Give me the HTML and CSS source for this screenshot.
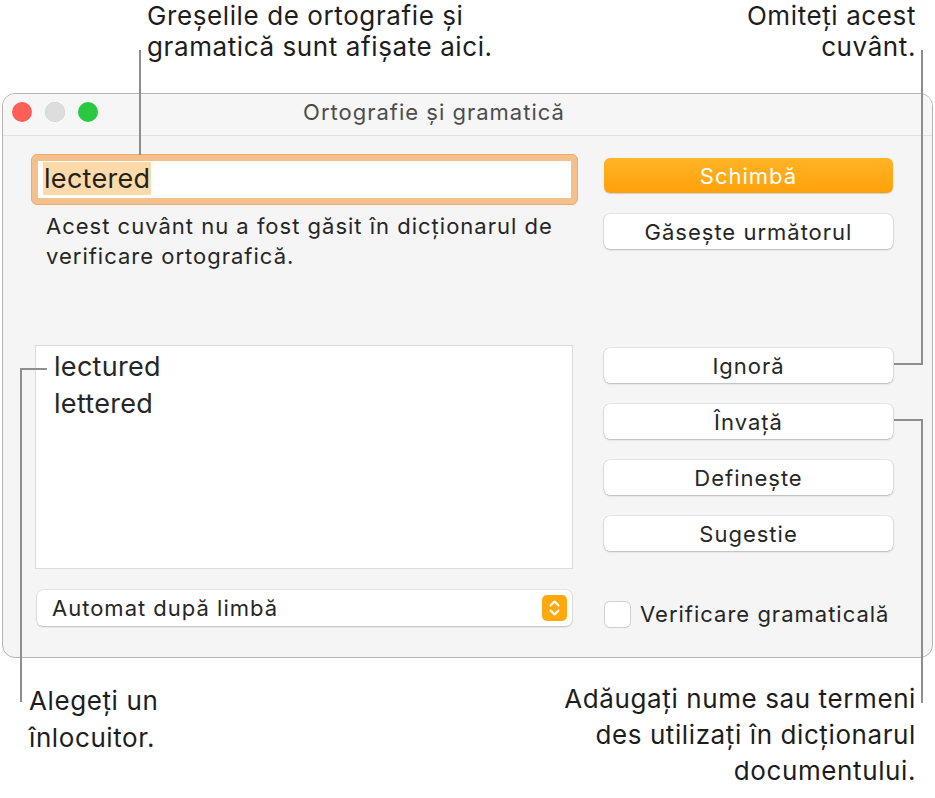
FILE: index.html
```html
<!DOCTYPE html>
<html lang="ro">
<head>
<meta charset="utf-8">
<title>Ortografie și gramatică</title>
<link rel="stylesheet" href="styles.css">
</head>
<body>
<div class="page">
  <div class="window">
    <div class="titlebar">
      <div class="lights">
        <span class="light red"></span>
        <span class="light gray"></span>
        <span class="light green"></span>
      </div>
      <div class="title">Ortografie și gramatică</div>
      <div></div>
    </div>
    <div class="content">
      <div class="left">
        <div class="ring"><div class="field"><span class="sel">lectered</span></div></div>
        <p class="desc">Acest cuvânt nu a fost găsit în dicționarul de verificare ortografică.</p>
        <div class="list">
          <div class="item">lectured</div>
          <div class="item">lettered</div>
        </div>
        <div class="popup">
          <span class="popup-label">Automat după limbă</span>
          <span class="stepper">
            <svg width="25" height="26" viewBox="0 0 25 26"><rect width="25" height="26" rx="5" fill="#ffa90f"/><path d="M8.5 10.5 L12.5 6.5 L16.5 10.5 M8.5 15.5 L12.5 19.5 L16.5 15.5" fill="none" stroke="#fff" stroke-width="2" stroke-linecap="round" stroke-linejoin="round"/></svg>
          </span>
        </div>
      </div>
      <div class="right">
        <button class="btn primary">Schimbă</button>
        <button class="btn">Găsește următorul</button>
        <button class="btn group">Ignoră</button>
        <button class="btn">Învață</button>
        <button class="btn">Definește</button>
        <button class="btn">Sugestie</button>
        <label class="check"><span class="box"></span><span>Verificare gramaticală</span></label>
      </div>
    </div>
  </div>

  <div class="note note-top">Greșelile de ortografie și<br>gramatică sunt afișate aici.</div>
  <div class="note note-omit">Omiteți acest<br>cuvânt.</div>
  <div class="note note-choose">Alegeți un<br>înlocuitor.</div>
  <div class="note note-add">Adăugați nume sau termeni<br>des utilizați în dicționarul<br>documentului.</div>

  <div class="line l-top"></div>
  <div class="line l-omit-v"></div>
  <div class="line l-omit-h"></div>
  <div class="line l-add-h"></div>
  <div class="line l-add-v"></div>
  <div class="line l-choose-h"></div>
  <div class="line l-choose-v"></div>
</div>
</body>
</html>
```
FILE: styles.css
```css
* { box-sizing: border-box; }
html, body { margin: 0; padding: 0; background: #fff; }
body {
  font-family: Inter, "Noto Sans", "DejaVu Sans", sans-serif;
  color: #262626;
}
.page {
  position: relative;
  width: 935px;
  height: 798px;
  padding: 93px 0 0 2px;
  overflow: hidden;
}
.window {
  width: 931px;
  height: 565px;
  border: 1px solid #b4b4b4;
  border-radius: 13px;
  background: #f5f5f5;
  overflow: hidden;
}
.titlebar {
  height: 42px;
  border-bottom: 1px solid #e1e1e1;
  background: #f6f6f6;
  display: grid;
  grid-template-columns: 1fr auto 1fr;
  align-items: center;
  padding: 0 76px 6px 9px;
}
.lights { display: flex; gap: 13px; }
.light {
  width: 20px; height: 20px; border-radius: 50%;
  display: block;
}
.red { background: #fe5f57; }
.gray { background: #dddddd; box-shadow: inset 0 0 0 0.5px #cfcfcf; }
.green { background: #2ac840; }
.title {
  font-size: 22px;
  color: #4d4d4d;
  letter-spacing: 1px;
}
.content {
  display: flex;
  gap: 26px;
  padding-left: 28px;
}
.left { width: 547px; display: flex; flex-direction: column; }
.right { width: 289px; display: flex; flex-direction: column; padding-top: 22px; }

.ring {
  margin-top: 18px;
  height: 51px;
  padding: 6px;
  border: 1px solid #eaab73;
  border-radius: 6px;
  background: #f4c08d;
}
.field {
  height: 37px;
  background: #fff;
  padding: 1px 0 0 5px;
  font-size: 27px;
  line-height: 34px;
  color: #222;
}
.sel { background: #fed9aa; padding: 0 1px; letter-spacing: 0.3px; }
.desc {
  margin: 6px 0 0 15px;
  font-size: 22px;
  line-height: 30px;
  width: 532px;
  letter-spacing: 1px;
}
.list {
  margin: 74px 0 0 4px;
  width: 538px;
  height: 224px;
  background: #fff;
  border: 1px solid #dcdcdc;
  padding: 2px 0 0 18px;
}
.item { font-size: 27px; line-height: 37px; letter-spacing: 0.3px; }
.popup {
  margin: 21px 0 0 6px;
  width: 535px;
  height: 36px;
  background: #fff;
  border-radius: 6px;
  box-shadow: 0 0 0 0.5px rgba(0,0,0,0.12), 0 1px 2px rgba(0,0,0,0.18);
  display: flex;
  align-items: center;
  justify-content: space-between;
  padding: 0 5px 0 15px;
}
.popup-label { font-size: 22px; letter-spacing: 1px; }
.stepper { display: flex; }

.btn {
  font-family: inherit;
  height: 35px;
  width: 289px;
  border: none;
  border-radius: 6px;
  background: #fff;
  box-shadow: 0 0 0 0.5px rgba(0,0,0,0.12), 0 1px 2px rgba(0,0,0,0.2);
  font-size: 22px;
  color: #262626;
  padding: 0;
  margin-bottom: 21px;
  letter-spacing: 1px;
}
.btn.primary {
  background: linear-gradient(#ffb426, #ffa00a);
  color: #fff;
  box-shadow: 0 0.5px 1px rgba(0,0,0,0.15);
}
.btn.group { margin-top: 78px; }
.check {
  margin-top: 29px;
  display: flex;
  align-items: center;
  gap: 10px;
  font-size: 22px;
  letter-spacing: 1px;
}
.box {
  width: 25px; height: 25px;
  margin-left: 1px;
  background: #fff;
  border-radius: 5px;
  box-shadow: 0 0 0 1px #d0d0d0, 0 1px 1px rgba(0,0,0,0.1);
}

.note {
  position: absolute;
  font-size: 26px;
  color: #1d1d1d;
  letter-spacing: 0.6px;
}
.note-top { left: 147px; top: 0; line-height: 31px; }
.note-omit { right: 19px; top: 0; line-height: 31px; text-align: right; }
.note-choose { left: 29px; top: 682px; line-height: 37px; }
.note-add { right: 19px; top: 681px; line-height: 36px; text-align: right; }

.line { position: absolute; background: #8e8e8e; }
.l-top { left: 139px; top: 50px; width: 2px; height: 105px; }
.l-omit-v { left: 921px; top: 50px; width: 2px; height: 315px; }
.l-omit-h { left: 894px; top: 363px; width: 29px; height: 2px; }
.l-add-h { left: 894px; top: 419px; width: 29px; height: 2px; }
.l-add-v { left: 921px; top: 419px; width: 2px; height: 284px; }
.l-choose-h { left: 20px; top: 368px; width: 27px; height: 2px; }
.l-choose-v { left: 20px; top: 368px; width: 2px; height: 334px; }
```
